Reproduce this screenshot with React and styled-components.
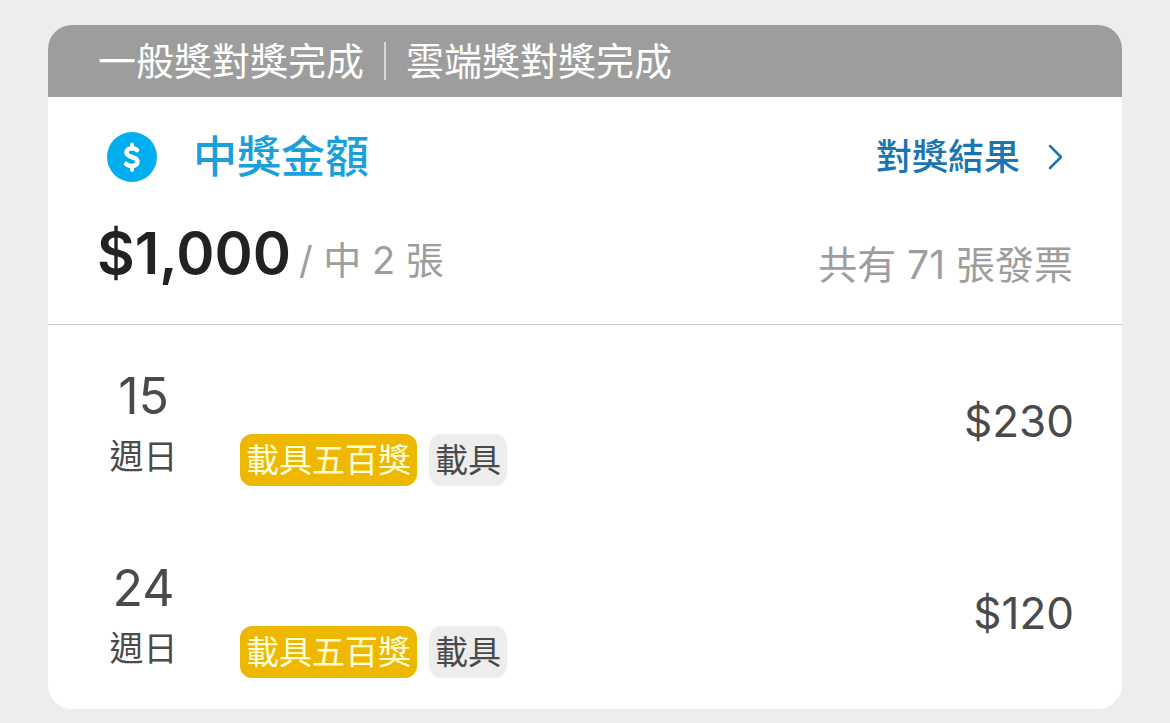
import styled, { createGlobalStyle } from 'styled-components';

const GlobalStyle = createGlobalStyle`
    * {
        box-sizing: border-box;
    }

    body {
        margin: 0;
        background-color: #EDEDED;
        font-family: Inter, "Noto Sans CJK TC", sans-serif;
        color: #4A4A4A;
    }
`

const Container = styled.main`
    padding: 25px 48px 14px;
`

const Card = styled.section`
    background-color: #FFFFFF;
    border-radius: 24px;
    overflow: hidden;
`

const StatusBar = styled.div`
    display: flex;
    align-items: center;
    height: 72px;
    padding: 0 50px;
    background-color: #9D9D9D;
    color: #FFFFFF;
    font-size: 38px;
    line-height: 72px;
`

const StatusDivider = styled.span`
    width: 2px;
    height: 38px;
    margin: 0 20px;
    background-color: #D8D8D8;
`

const Summary = styled.div`
    padding: 32px 49px 11px;
    border-bottom: 1px solid #C8C8C8;
`

const SummaryTop = styled.div`
    display: flex;
    justify-content: space-between;
    align-items: center;
    padding: 0 10px;
`

const Title = styled.h1`
    display: flex;
    align-items: center;
    gap: 36px;
    margin: 0;
    color: #1B9FDA;
    font-size: 44px;
    font-weight: 500;
    line-height: 56px;
`

const ResultLink = styled.a`
    display: flex;
    align-items: center;
    gap: 28px;
    color: #1B75B0;
    font-size: 36px;
    font-weight: 500;
    line-height: 56px;
    text-decoration: none;
`

const SummaryBottom = styled.div`
    display: flex;
    justify-content: space-between;
    align-items: flex-start;
    margin-top: 32px;
`

const Total = styled.div`
    display: flex;
    align-items: baseline;
    gap: 8px;
    line-height: 72px;
`

const TotalAmount = styled.strong`
    color: #222222;
    font-size: 58px;
    font-weight: 600;
`

const Note = styled.span`
    color: #9D9D9D;
    font-size: 38px;
`

const InvoiceCount = styled.span`
    color: #9D9D9D;
    font-size: 39px;
    line-height: 96px;
`

const InvoiceList = styled.ul`
    margin: 0;
    padding: 0;
    list-style: none;
`

const InvoiceRow = styled.li`
    display: flex;
    align-items: center;
    height: 192px;
    padding: 0 48px;
`

const DateColumn = styled.div`
    display: flex;
    flex-direction: column;
    align-items: center;
    width: 95px;
    padding-top: 12px;
`

const Day = styled.span`
    font-size: 50px;
    line-height: 60px;
`

const Weekday = styled.span`
    font-size: 34px;
    line-height: 62px;
`

const Tags = styled.div`
    display: flex;
    flex: 1;
    gap: 12px;
    margin: 78px 0 0 49px;
`

const Tag = styled.span`
    height: 52px;
    padding: 0 6px;
    border-radius: 12px;
    background-color: ${props => props.$prize ? "#EFB800" : "#EDEDED"};
    color: ${props => props.$prize ? "#FFFFD8" : "#4A4A4A"};
    font-size: 33px;
    line-height: 52px;
`

const Price = styled.span`
    font-size: 44px;
`

const invoices = [
    { id: 1, day: "15", weekday: "週日", prize: "載具五百獎", type: "載具", price: "$230" },
    { id: 2, day: "24", weekday: "週日", prize: "載具五百獎", type: "載具", price: "$120" },
];

const DollarIcon = () => (
    <svg width="50" height="50" viewBox="0 0 50 50" fill="none" aria-hidden="true">
        <circle cx="25" cy="25" r="25" fill="#00AEEF" />
        <g stroke="#FFFFFF" strokeWidth="4.5" strokeLinecap="round" strokeLinejoin="round">
            <path d="M25 12.5v4M25 34v4" strokeWidth="4" />
            <path d="M30 18C28.5 16.8 27 16.2 25 16.2C21.7 16.2 19.5 18 19.5 20.5C19.5 26 30.5 24 30.5 29.6C30.5 32.3 28.5 34 25 34C22.7 34 20.8 33.3 19.2 32" />
        </g>
    </svg>
)

const ChevronIcon = () => (
    <svg width="15" height="26" viewBox="0 0 15 26" fill="none" aria-hidden="true">
        <path d="M2 2L13 13L2 24" stroke="#1B75B0" strokeWidth="2.5" strokeLinecap="round" strokeLinejoin="round" />
    </svg>
)

const App = () => {
    return (
    <>
        <GlobalStyle />
        <Container>
            <Card>
                <StatusBar>
                    <span>一般獎對獎完成</span>
                    <StatusDivider />
                    <span>雲端獎對獎完成</span>
                </StatusBar>
                <Summary>
                    <SummaryTop>
                        <Title>
                            <DollarIcon />
                            中獎金額
                        </Title>
                        <ResultLink href="#results">
                            對獎結果
                            <ChevronIcon />
                        </ResultLink>
                    </SummaryTop>
                    <SummaryBottom>
                        <Total>
                            <TotalAmount>$1,000</TotalAmount>
                            <Note>/ 中 2 張</Note>
                        </Total>
                        <InvoiceCount>共有 71 張發票</InvoiceCount>
                    </SummaryBottom>
                </Summary>
                <InvoiceList>
                    {invoices.map(item => (
                        <InvoiceRow key={item.id}>
                            <DateColumn>
                                <Day>{item.day}</Day>
                                <Weekday>{item.weekday}</Weekday>
                            </DateColumn>
                            <Tags>
                                <Tag $prize>{item.prize}</Tag>
                                <Tag>{item.type}</Tag>
                            </Tags>
                            <Price>{item.price}</Price>
                        </InvoiceRow>
                    ))}
                </InvoiceList>
            </Card>
        </Container>
    </>
    )
}

export default App
